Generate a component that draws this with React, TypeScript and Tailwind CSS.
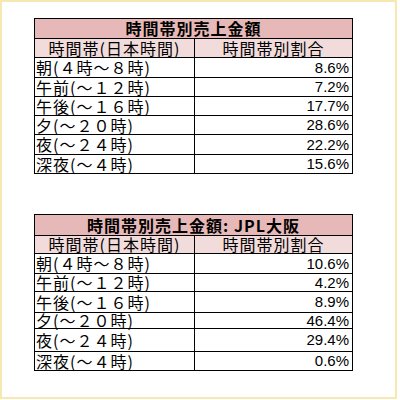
import React from "react";

type Row = { label: string; value: string; h: string };

const tokyo: Row[] = [
  { label: "朝(４時～８時)", value: "8.6%", h: "h-[20px]" },
  { label: "午前(～１２時)", value: "7.2%", h: "h-[19px]" },
  { label: "午後(～１６時)", value: "17.7%", h: "h-[19px]" },
  { label: "夕(～２０時)", value: "28.6%", h: "h-[19px]" },
  { label: "夜(～２４時)", value: "22.2%", h: "h-[20px]" },
  { label: "深夜(～４時)", value: "15.6%", h: "h-[19px]" },
];

const osaka: Row[] = [
  { label: "朝(４時～８時)", value: "10.6%", h: "h-[20px]" },
  { label: "午前(～１２時)", value: "4.2%", h: "h-[18px]" },
  { label: "午後(～１６時)", value: "8.9%", h: "h-[21px]" },
  { label: "夕(～２０時)", value: "46.4%", h: "h-[16px]" },
  { label: "夜(～２４時)", value: "29.4%", h: "h-[23px]" },
  { label: "深夜(～４時)", value: "0.6%", h: "h-[19px]" },
];

const SalesTable = ({
  title,
  rows,
  titleH,
  headH,
}: {
  title: string;
  rows: Row[];
  titleH: string;
  headH: string;
}) => {
  return (
    <div className="flex w-[319px] flex-col border border-black text-black">
      <div
        className={`flex ${titleH} items-center justify-center bg-[#e6b8b7] text-[16px] font-bold leading-[15px] tracking-[1px]`}
      >
        {title}
      </div>
      <div
        className={`flex ${headH} border-t border-black bg-[#f2dcdb] text-[16px] leading-[15px] tracking-[1px]`}
      >
        <div className="flex w-[160px] items-center justify-center border-r border-black">
          時間帯(日本時間)
        </div>
        <div className="flex flex-1 items-center justify-center">時間帯別割合</div>
      </div>
      {rows.map((r) => (
        <div key={r.label} className={`flex ${r.h} border-t border-black`}>
          <div className="flex w-[160px] items-center border-r border-black pl-[1px] text-[16px] leading-[15px] tracking-[1px]">
            {r.label}
          </div>
          <div className="flex flex-1 items-center justify-end pr-[3px] font-['Liberation_Sans',sans-serif] text-[15px] leading-[14px]">
            {r.value}
          </div>
        </div>
      ))}
    </div>
  );
};

export default function App() {
  return (
    <div className="h-[400px] w-[400px] bg-white font-['Noto_Sans_CJK_JP','Noto_Sans',sans-serif]">
      <div className="flex h-[399px] w-[397px] flex-col border-2 border-[#f5e8b0] pl-[32px] pt-[16px]">
        <SalesTable
          title="時間帯別売上金額"
          rows={tokyo}
          titleH="h-[19px]"
          headH="h-[19px]"
        />
        <div className="h-[40px]" />
        <SalesTable
          title="時間帯別売上金額: JPL大阪"
          rows={osaka}
          titleH="h-[20px]"
          headH="h-[18px]"
        />
      </div>
    </div>
  );
}
